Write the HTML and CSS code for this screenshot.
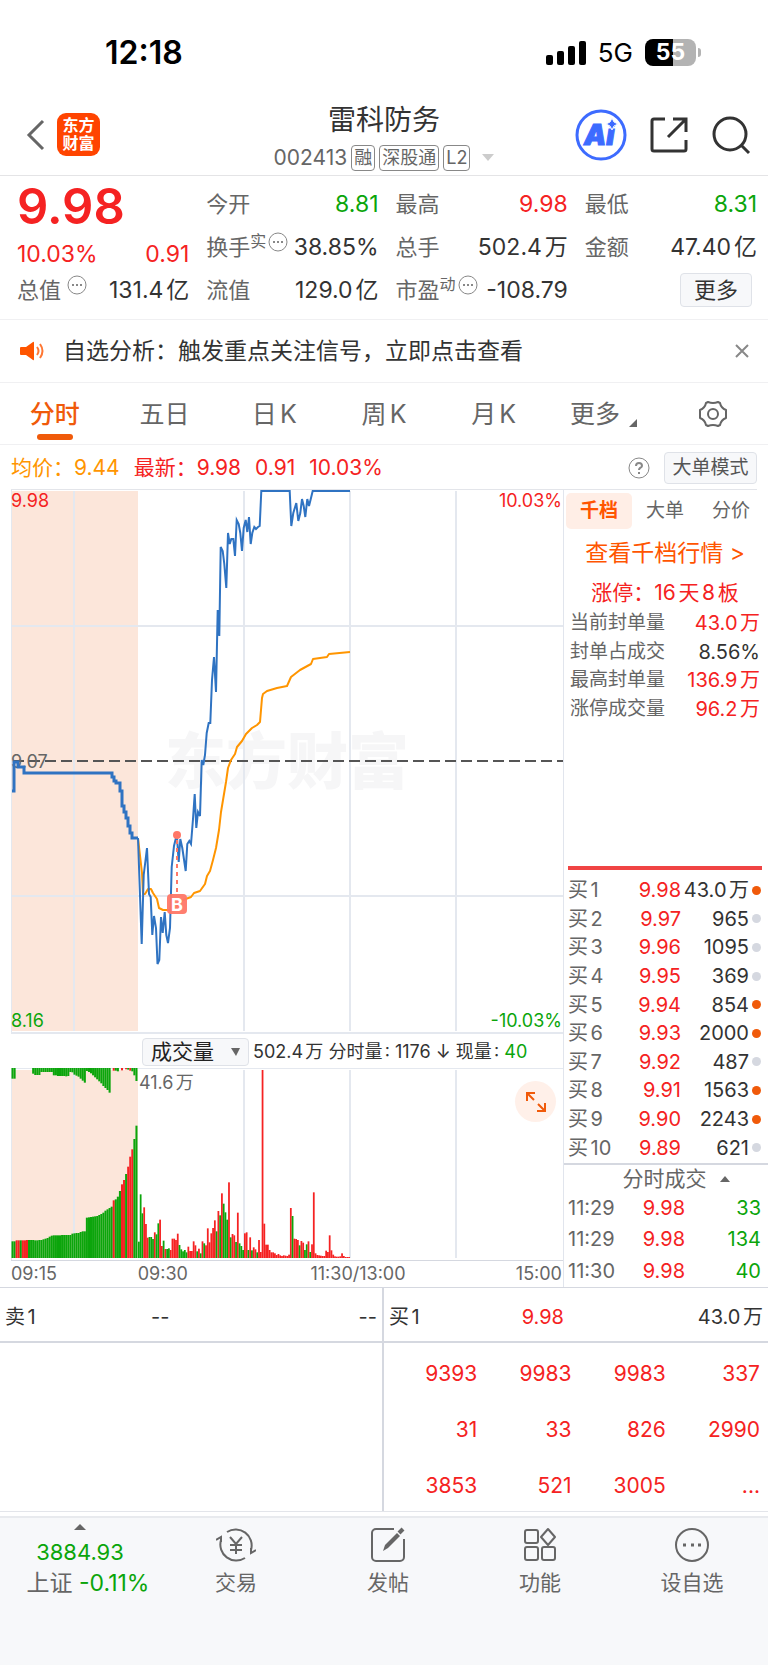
FILE: index.html
```html
<!DOCTYPE html>
<html lang="zh-CN">
<head>
  <meta charset="UTF-8">
  <meta name="viewport" content="width=device-width, initial-scale=1.0">
  <title>雷科防务 002413</title>
  <link rel="stylesheet" href="styles.css">
</head>
<body>
  <div class="status-bar">
    <span class="clock">12:18</span>
    <div class="status-icons">
      <svg width="40" height="24" viewBox="0 0 40 24">
        <rect x="0" y="14" width="7" height="10" rx="2"/>
        <rect x="11" y="10" width="7" height="14" rx="2"/>
        <rect x="22" y="5" width="7" height="19" rx="2"/>
        <rect x="33" y="0" width="7" height="24" rx="2"/>
      </svg>
      <span class="network">5G</span>
      <div class="battery"><span>55</span></div>
    </div>
  </div>

  <header class="header">
    <div class="header-left">
      <button class="icon-button" aria-label="返回">
        <svg width="19" height="32" viewBox="0 0 19 32" fill="none" stroke="#666" stroke-width="3"><path d="M17 2 3 16l14 14"/></svg>
      </button>
      <a class="logo" href="#">东方<br>财富</a>
    </div>
    <div class="header-title">
      <h1>雷科防务</h1>
      <div class="stock-code">
        <span>002413</span>
        <span class="badge">融</span>
        <span class="badge">深股通</span>
        <span class="badge">L2</span>
        <svg class="caret" width="12" height="7" viewBox="0 0 12 7"><path d="M0 0h12L6 7z" fill="#ccc"/></svg>
      </div>
    </div>
    <div class="header-right">
      <button class="icon-button" aria-label="智能助手">
        <svg width="52" height="52" viewBox="0 0 52 52">
          <circle cx="26" cy="26" r="24" fill="#fff" stroke="#3d6bff" stroke-width="3"/>
          <text class="ai-text" x="9" y="36">Ai</text>
          <path d="M37 9l2 4 4 2-4 2-2 4-2-4-4-2 4-2z" fill="#3d6bff" stroke="#fff" stroke-width="1"/>
        </svg>
      </button>
      <button class="icon-button" aria-label="分享">
        <svg width="38" height="38" viewBox="0 0 38 38" fill="none" stroke="#333" stroke-width="3">
          <path d="M15 3H4a2 2 0 0 0-2 2v28a2 2 0 0 0 2 2h30a2 2 0 0 0 2-2V24"/>
          <path d="M23 3h13v13M36 3 18 21"/>
        </svg>
      </button>
      <button class="icon-button" aria-label="搜索">
        <svg width="40" height="40" viewBox="0 0 40 40" fill="none" stroke="#333" stroke-width="3">
          <circle cx="19" cy="19" r="16"/><path d="M30 30l8 8"/>
        </svg>
      </button>
    </div>
  </header>

  <section class="quote">
    <div class="quote-col">
      <div class="price">9.98</div>
      <div class="quote-change"><span>10.03%</span><span>0.91</span></div>
      <div class="quote-row">
        <span class="label">总值</span>
        <svg class="info" viewBox="0 0 20 20"><circle cx="10" cy="10" r="9"/><path d="M5 10h2M9 10h2M13 10h2"/></svg>
        <span class="value">131.4亿</span>
      </div>
    </div>
    <div class="quote-col">
      <div class="quote-row"><span class="label">今开</span><span class="value green">8.81</span></div>
      <div class="quote-row">
        <span class="label">换手</span><span class="sup">实</span>
        <svg class="info" viewBox="0 0 20 20"><circle cx="10" cy="10" r="9"/><path d="M5 10h2M9 10h2M13 10h2"/></svg>
        <span class="value">38.85%</span>
      </div>
      <div class="quote-row"><span class="label">流值</span><span class="value">129.0亿</span></div>
    </div>
    <div class="quote-col">
      <div class="quote-row"><span class="label">最高</span><span class="value red">9.98</span></div>
      <div class="quote-row"><span class="label">总手</span><span class="value">502.4万</span></div>
      <div class="quote-row">
        <span class="label">市盈</span><span class="sup">动</span>
        <svg class="info" viewBox="0 0 20 20"><circle cx="10" cy="10" r="9"/><path d="M5 10h2M9 10h2M13 10h2"/></svg>
        <span class="value">-108.79</span>
      </div>
    </div>
    <div class="quote-col">
      <div class="quote-row"><span class="label">最低</span><span class="value green">8.31</span></div>
      <div class="quote-row"><span class="label">金额</span><span class="value">47.40亿</span></div>
      <div class="quote-row"><button class="more-button">更多</button></div>
    </div>
  </section>

  <div class="notice">
    <svg width="24" height="20" viewBox="0 0 24 20" fill="#ff5500">
      <path d="M1 6h5l7-5q1-1 1 1v16q0 2-1 1l-7-5H1q-1 0-1-1V7q0-1 1-1z"/>
      <path d="M17 6q3 4 0 8M20 3q5 7 0 14" fill="none" stroke="#ff7733" stroke-width="2"/>
    </svg>
    <p>自选分析：触发重点关注信号，立即点击查看</p>
    <button class="icon-button" aria-label="关闭">
      <svg width="14" height="14" viewBox="0 0 14 14" stroke="#888" stroke-width="2"><path d="M1 1l12 12M13 1 1 13"/></svg>
    </button>
  </div>

  <nav class="tabs">
    <button class="active">分时</button>
    <button>五日</button>
    <button>日K</button>
    <button>周K</button>
    <button>月K</button>
    <button>更多<svg class="corner" width="8" height="8" viewBox="0 0 8 8"><path d="M8 0v8H0z" fill="#666"/></svg></button>
    <button aria-label="设置">
      <svg width="30" height="28" viewBox="0 0 30 28" fill="none" stroke="#666" stroke-width="2" stroke-linejoin="round">
        <path d="M10 2q5 2 10 0l2 1q1 5 6 7v8q-5 2-6 7l-2 1q-5-2-10 0l-2-1q-1-5-6-7v-8q5-2 6-7z"/>
        <circle cx="15" cy="14" r="5"/>
      </svg>
    </button>
  </nav>

  <div class="chart-info">
    <span class="orange">均价：9.44</span>
    <span class="red">最新：9.98</span>
    <span class="red">0.91</span>
    <span class="red">10.03%</span>
    <svg class="help" width="22" height="22" viewBox="0 0 22 22"><circle cx="11" cy="11" r="10"/><path d="M8 9q0-3 3-3t3 3q0 1-2 2-1 1-1 2M11 15v2"/></svg>
    <button class="mode-button">大单模式</button>
  </div>

  <main class="market">
    <div class="charts">
      <svg class="price-chart" viewBox="11 490 552 544">
        <rect x="11" y="491" width="127" height="540" fill="#fce6da"/>
        <text class="watermark" x="165" y="784">东方财富</text>
        <path class="grid" d="M11 626h552M11 896h552M74 491v540M244 491v540M350 491v540M456 491v540M11 490v544M11 1033h552"/>
        <path class="base-line" d="M13 761H563"/>
        <text class="tick grey" x="11" y="768">9.07</text>
        <path class="avg-line" d="M138 838 142 873 143 894 145 894 148 889 151 889 153 893 157 899 159 908 163 910 173 910 176 907 183 900 191 897 194 893 200 891 205 884 207 876 210 871 213 860 216 848 219 830 221 812 223 800 225 788 226 782 228 768 231 760 235 754 237 747 242 741 246 734 252 728 257 725 260 722 262 698 263 694 267 691 277 688 287 686 291 677 300 670 311 664 313 659 327 657 329 654 350 652"/>
        <path class="auction-line" d="M12 791h2v-29h4v5h6v6h88v4h2v4h2v2h4v8h2v15h2v6h2v6h2v8h2v7h2v5h6"/>
        <path class="price-line" d="M138 838 141.7 944 143.7 875 145.3 862 147 848 149 894 150.7 897 152.3 935 154 916 156 928 157.5 964 159.3 960 161 917 162.7 933 164.7 912 166.3 935 168 943 170 928 171.7 867 174 846 175.7 839 177 837 178.7 862 180.3 839 182.3 848 185.7 871 187.3 844 189.3 841 191 844 193 819 194.7 794 196.3 828 198 812 200 816 201.7 760 203.3 765 205 755 206.7 733 208.7 723 210.3 723 212 680 214 657 216 692 217.7 610 219.3 636 220.7 547 222.7 551 224.3 564 226.3 588 228 533 229.7 544 231.3 539 233.3 539 235 556 236.7 520 238.7 524 240.3 533 242 551 243.7 528 245.7 520 247.3 532 249 517 250.7 544 252.3 533 254.3 527 256 529 258 527 259.7 526 261.3 491 289.7 491 291.3 526 293.3 513 296.3 503 298.3 521 300.3 513 302 499 303.7 506 305.3 517 307.3 499 309 506 311 498 312.7 491 350 491"/>
        <path class="trade-line" d="M177 840v55"/>
        <circle cx="177" cy="835" r="4" fill="#ff7767"/>
        <rect x="167" y="894" width="20" height="20" rx="4" fill="#ff7767" fill-opacity=".95"/>
        <text class="trade-mark" x="177" y="911">B</text>
        <text class="tick up" x="11" y="507">9.98</text>
        <text class="tick up end" x="562" y="507">10.03%</text>
        <text class="tick down" x="11" y="1027">8.16</text>
        <text class="tick down end" x="562" y="1027">-10.03%</text>
      </svg>

      <div class="volume-bar">
        <div class="select-wrap">
          <select aria-label="指标">
            <option>成交量</option>
            <option>成交额</option>
          </select>
          <svg width="9" height="8" viewBox="0 0 9 8"><path d="M0 0h9L5 8z" fill="#666"/></svg>
        </div>
        <span>502.4万 分时量: 1176 ↓ 现量: <b class="green">40</b></span>
      </div>

      <div class="volume-wrap">
        <svg class="volume-chart" viewBox="0 0 552 192">
          <rect x="0" y="2" width="127" height="188" fill="#fce6da"/>
          <path class="grid" d="M0 0h552M63 2v188M233 2v188M339 2v188M445 2v188M0 0v192"/>
          <g id="bars"></g>
          <text class="tick grey" x="128" y="21">41.6万</text>
        </svg>
        <button class="expand" aria-label="放大">
          <svg width="22" height="22" viewBox="0 0 22 22" fill="none" stroke="#f05a0a" stroke-width="2"><path d="M2 10V2h8M2 2l7 7M20 12v8h-8M20 20l-7-7"/></svg>
        </button>
      </div>

      <div class="axis">
        <span>09:15</span>
        <span>09:30</span>
        <span class="axis-end"><i>11:30/13:00</i><i>15:00</i></span>
      </div>
    </div>

    <aside class="side">
      <div class="side-tabs">
        <button class="active">千档</button>
        <button>大单</button>
        <button>分价</button>
      </div>
      <a class="depth-link" href="#">查看千档行情 &gt;</a>
      <div class="limit-title">涨停：16天8板</div>
      <table class="limit-table">
        <tr><th>当前封单量</th><td class="red">43.0万</td></tr>
        <tr><th>封单占成交</th><td>8.56%</td></tr>
        <tr><th>最高封单量</th><td class="red">136.9万</td></tr>
        <tr><th>涨停成交量</th><td class="red">96.2万</td></tr>
      </table>
      <div class="ladder">
        <table class="bid-table">
          <tr><th>买1</th><td class="red">9.98</td><td>43.0万</td><td><i class="dot hot"></i></td></tr>
          <tr><th>买2</th><td class="red">9.97</td><td>965</td><td><i class="dot"></i></td></tr>
          <tr><th>买3</th><td class="red">9.96</td><td>1095</td><td><i class="dot"></i></td></tr>
          <tr><th>买4</th><td class="red">9.95</td><td>369</td><td><i class="dot"></i></td></tr>
          <tr><th>买5</th><td class="red">9.94</td><td>854</td><td><i class="dot hot"></i></td></tr>
          <tr><th>买6</th><td class="red">9.93</td><td>2000</td><td><i class="dot hot"></i></td></tr>
          <tr><th>买7</th><td class="red">9.92</td><td>487</td><td><i class="dot"></i></td></tr>
          <tr><th>买8</th><td class="red">9.91</td><td>1563</td><td><i class="dot hot"></i></td></tr>
          <tr><th>买9</th><td class="red">9.90</td><td>2243</td><td><i class="dot hot"></i></td></tr>
          <tr><th>买10</th><td class="red">9.89</td><td>621</td><td><i class="dot"></i></td></tr>
        </table>
      </div>
      <button class="trades-title">分时成交<svg width="10" height="6" viewBox="0 0 10 6"><path d="M0 6h10L5 0z" fill="#666"/></svg></button>
      <table class="trades-table">
        <tr><th>11:29</th><td class="red">9.98</td><td class="green">33</td></tr>
        <tr><th>11:29</th><td class="red">9.98</td><td class="green">134</td></tr>
        <tr><th>11:30</th><td class="red">9.98</td><td class="green">40</td></tr>
      </table>
    </aside>
  </main>

  <section class="orders">
    <div class="order-side sell">
      <div class="order-head"><span>卖1</span><span>--</span><span>--</span></div>
    </div>
    <div class="order-side buy">
      <div class="order-head"><span>买1</span><span class="red">9.98</span><span>43.0万</span></div>
      <table class="order-table">
        <tr><td>9393</td><td>9983</td><td>9983</td><td>337</td></tr>
        <tr><td>31</td><td>33</td><td>826</td><td>2990</td></tr>
        <tr><td>3853</td><td>521</td><td>3005</td><td>...</td></tr>
      </table>
    </div>
  </section>

  <footer class="footer">
    <button class="index">
      <svg width="12" height="6" viewBox="0 0 12 6"><path d="M0 6h12L6 0z" fill="#666"/></svg>
      <span class="green">3884.93</span>
      <span class="index-change">上证 <span class="green">-0.11%</span></span>
    </button>
    <button>
      <svg width="40" height="36" viewBox="0 0 40 36" fill="none" stroke="#666" stroke-width="2">
        <path d="M11 5A16 16 0 0 1 35 23M29 31A16 16 0 0 1 5 13M0 13l5-3v5M40 23l-5 3v-5"/>
        <path d="M14 10l6 7 6-7M20 17v10M14 18h12M14 23h12"/>
      </svg>
      <span>交易</span>
    </button>
    <button>
      <svg width="36" height="36" viewBox="0 0 36 36" fill="none" stroke="#666" stroke-width="2">
        <path d="M24 2H6a4 4 0 0 0-4 4v24a4 4 0 0 0 4 4h24a4 4 0 0 0 4-4V12"/>
        <path d="M13 24l2-6L27 6l3 3-12 12z" fill="#666" stroke="none"/><path d="M29 6l4-4" stroke-width="4"/>
      </svg>
      <span>发帖</span>
    </button>
    <button>
      <svg width="34" height="36" viewBox="0 0 34 36" fill="none" stroke="#666" stroke-width="2">
        <rect x="2" y="3" width="13" height="13" rx="2"/>
        <rect x="2" y="20" width="13" height="13" rx="2"/>
        <rect x="19" y="20" width="13" height="13" rx="2"/>
        <path d="M25 2l7 8-7 8-7-8z" stroke-linejoin="round"/>
      </svg>
      <span>功能</span>
    </button>
    <button>
      <svg width="36" height="36" viewBox="0 0 36 36" fill="none" stroke="#666" stroke-width="2">
        <circle cx="18" cy="18" r="16"/>
        <path d="M9 18h3M17 18h3M24 18h3" stroke-width="3"/>
      </svg>
      <span>设自选</span>
    </button>
  </footer>

  <script src="script.js"></script>
</body>
</html>
```
FILE: styles.css
```css
* {
  box-sizing: border-box;
}
body {
  margin: 0;
  background: #fff;
  color: #333;
  font-family: Inter, "Noto Sans CJK SC", sans-serif;
  font-size: 22px;
  line-height: 28px;
  text-autospace: normal;
}
h1, p {
  margin: 0;
  font-weight: 400;
}
button, select {
  font: inherit;
  color: inherit;
  border: none;
  background: none;
  padding: 0;
  margin: 0;
  cursor: pointer;
}
a {
  text-decoration: none;
}
svg {
  display: block;
  flex-shrink: 0;
}
table {
  border-collapse: collapse;
}
th, td {
  padding: 0;
  font-weight: 400;
  text-align: right;
}
th {
  text-align: left;
  color: #666;
}
i {
  font-style: normal;
}
.red {
  color: #f52222;
}
.green {
  color: #0ba50b;
}
.orange {
  color: #ff9500;
}
.icon-button {
  display: flex;
}

/* status bar */
.status-bar {
  display: flex;
  justify-content: space-between;
  align-items: center;
  height: 96px;
  padding: 9px 72px 0 105px;
  color: #000;
}
.clock {
  font-size: 32px;
  font-weight: 600;
}
.status-icons {
  display: flex;
  align-items: center;
  gap: 12px;
}
.network {
  font-size: 26px;
}
.battery {
  position: relative;
  width: 51px;
  height: 27px;
  border-radius: 8px;
  background: linear-gradient(90deg, #000 55%, #b3b3b3 55%);
  color: #fff;
  font-size: 23px;
  font-weight: 700;
  line-height: 27px;
  text-align: center;
}
.battery::after {
  content: "";
  position: absolute;
  right: -5px;
  top: 9px;
  width: 3px;
  height: 9px;
  border-radius: 0 3px 3px 0;
  background: #b3b3b3;
}

/* header */
.header {
  display: grid;
  grid-template-columns: 1fr auto 1fr;
  align-items: center;
  height: 80px;
  padding: 0 17px 2px;
  border-bottom: 1px solid #e4e4e6;
}
.header-left {
  display: flex;
  align-items: center;
  gap: 12px;
  padding-left: 9px;
}
.logo {
  width: 43px;
  height: 43px;
  padding: 3px 0;
  border-radius: 9px;
  background: #ff4400;
  color: #fff;
  font-size: 16px;
  font-weight: 700;
  line-height: 18px;
  text-align: center;
}
.header-title {
  display: flex;
  flex-direction: column;
  align-items: center;
  gap: 8px;
  padding-top: 4px;
}
.header-title h1 {
  font-size: 28px;
  line-height: 34px;
}
.stock-code {
  display: flex;
  align-items: center;
  gap: 4px;
  color: #666;
  font-size: 21px;
  line-height: 26px;
}
.badge {
  padding: 0 2px;
  border: 1px solid #888;
  border-radius: 4px;
  font-size: 18px;
  line-height: 24px;
}
.caret {
  margin-left: 8px;
}
.header-right {
  display: flex;
  justify-content: flex-end;
  align-items: center;
  gap: 23px;
}
.ai-text {
  fill: #3d6bff;
  stroke: #3d6bff;
  font-size: 28px;
  font-weight: 900;
  font-style: italic;
}

/* quote */
.quote {
  display: grid;
  grid-template-columns: repeat(4, 1fr);
  gap: 17px;
  padding: 6px 11px 8px 17px;
  border-bottom: 1px solid #f0f0f2;
}
.price {
  color: #f52222;
  font-size: 49px;
  font-weight: 600;
  line-height: 50px;
}
.quote-change {
  display: flex;
  justify-content: space-between;
  padding: 8px 0 0;
  color: #f52222;
  font-size: 23px;
}
.quote-row {
  display: flex;
  align-items: center;
  height: 43px;
}
.label {
  color: #666;
}
.value {
  margin-left: auto;
  font-size: 23px;
}
.sup {
  align-self: flex-start;
  margin-top: 4px;
  color: #666;
  font-size: 16px;
  line-height: 24px;
}
.info {
  align-self: flex-start;
  width: 20px;
  margin: 7px 0 0 2px;
  fill: none;
  stroke: #888;
  stroke-width: 1;
}
.label + .info {
  margin-left: 6px;
}
.info path {
  stroke-width: 2;
}
.more-button {
  width: 72px;
  height: 34px;
  margin: 0 5px 0 auto;
  border: 1px solid #dfe2e8;
  border-radius: 4px;
  background: #f7f8fa;
}

/* notice */
.notice {
  display: flex;
  align-items: center;
  gap: 19px;
  height: 63px;
  padding: 0 19px 0 20px;
  border-bottom: 1px solid #f0f0f2;
  font-size: 23px;
}
.notice p {
  flex: 1;
}

/* tabs */
.tabs {
  display: grid;
  grid-template-columns: repeat(7, 1fr);
  height: 62px;
  border-bottom: 1px solid #f0f0f2;
  color: #666;
  font-size: 25px;
}
.tabs button {
  position: relative;
  display: flex;
  justify-content: center;
  align-items: center;
}
.tabs .active {
  color: #f05a0a;
  font-weight: 500;
}
.tabs .active::after {
  content: "";
  position: absolute;
  bottom: 4px;
  width: 36px;
  height: 6px;
  border-radius: 3px;
  background: #f05a0a;
}
.corner {
  margin: 18px 0 0 9px;
}

/* chart */
.chart-info {
  display: flex;
  align-items: center;
  gap: 14px;
  height: 45px;
  margin: 0 11px;
  padding-top: 2px;
  border-bottom: 1px solid #e3e5ea;
  font-size: 21px;
}
.help {
  margin-left: auto;
  fill: none;
  stroke: #888;
}
.help path {
  stroke-width: 2;
}
.mode-button {
  width: 93px;
  height: 32px;
  border: 1px solid #dfe2e8;
  border-radius: 4px;
  background: #f7f8fa;
  color: #555;
  font-size: 19px;
}
.market {
  display: flex;
  border-bottom: 1px solid #d5d8e0;
}
.charts {
  flex: 1;
  min-width: 0;
  margin-left: 11px;
}
.price-chart, .volume-chart {
  width: 100%;
  height: auto;
}
.grid {
  fill: none;
  stroke: #e4e8ef;
  stroke-width: 2;
}
.watermark {
  fill: #f6f6f7;
  font-size: 61px;
  font-weight: 900;
}
.base-line {
  stroke: #555;
  stroke-width: 2;
  stroke-dasharray: 11 5;
}
.avg-line, .price-line, .auction-line {
  fill: none;
  stroke: #2f73c2;
  stroke-width: 2;
}
.auction-line {
  stroke-width: 3;
}
.avg-line {
  stroke: #ff9500;
  stroke-linejoin: round;
}
.trade-line {
  stroke: #ff7767;
  stroke-width: 2;
  stroke-dasharray: 4 4;
}
.trade-mark {
  fill: #fff;
  font-size: 18px;
  font-weight: 700;
  text-anchor: middle;
}
.tick {
  font-size: 18px;
}
.tick.up {
  fill: #f52222;
}
.tick.down {
  fill: #0ba50b;
}
.tick.grey {
  fill: #666;
}
.tick.end {
  text-anchor: end;
}
.volume-bar {
  display: flex;
  align-items: center;
  gap: 4px;
  height: 34px;
  padding: 2px 0 0 131px;
  font-size: 18px;
  white-space: nowrap;
}
.volume-bar b {
  font-weight: 400;
}
.select-wrap {
  position: relative;
}
.select-wrap select {
  display: block;
  width: 107px;
  height: 28px;
  padding-left: 8px;
  border: 1px solid #dfe2e8;
  border-radius: 4px;
  background: #f7f8fa;
  color: #222;
  font-size: 21px;
  line-height: 26px;
  appearance: none;
}
.select-wrap svg {
  position: absolute;
  right: 9px;
  top: 10px;
  pointer-events: none;
}
.volume-wrap {
  position: relative;
}
.bar-up {
  fill: #f52222;
}
.bar-down {
  fill: #0ba50b;
}
.expand {
  position: absolute;
  top: 13px;
  right: 7px;
  display: flex;
  justify-content: center;
  align-items: center;
  width: 41px;
  height: 41px;
  border-radius: 50%;
  background: #fff0e9;
}
.axis {
  display: grid;
  grid-template-columns: 127fr 173fr 252fr;
  padding-right: 1px;
  border-top: 1px solid #d5d8e0;
  color: #666;
  font-size: 18px;
  line-height: 26px;
}
.axis-end {
  display: flex;
  justify-content: space-between;
}

/* side panel */
.side {
  display: flex;
  flex-direction: column;
  width: 205px;
  border-left: 1px solid #e1e5ed;
  font-size: 20px;
}
.side-tabs {
  display: grid;
  grid-template-columns: repeat(3, 1fr);
  height: 39px;
  padding: 3px 4px 0 2px;
  color: #666;
  font-size: 19px;
}
.side-tabs .active {
  border-radius: 5px;
  background: #ffeee6;
  color: #ff5500;
  font-weight: 600;
}
.depth-link {
  padding-right: 2px;
  color: #ff5500;
  font-size: 23px;
  line-height: 48px;
  text-align: center;
}
.limit-title {
  padding-right: 2px;
  color: #f52222;
  font-size: 21px;
  line-height: 32px;
  text-align: center;
}
.limit-table {
  height: 114px;
  margin: 0 8px 0 6px;
}
.limit-table th {
  font-size: 19px;
}
.side tr {
  line-height: 24px;
}
.ladder {
  margin: auto 6px 0 4px;
  padding: 6px 0 1px;
  border-top: 4px solid #f04444;
}
.bid-table {
  width: 100%;
  height: 286px;
  table-layout: fixed;
}
.bid-table th {
  width: 46px;
}
.bid-table td:nth-child(2) {
  width: 67px;
}
.bid-table td:nth-child(4) {
  width: 13px;
}
.dot {
  display: block;
  width: 9px;
  height: 9px;
  margin-left: 3px;
  border-radius: 50%;
  background: #d5d8e0;
}
.dot.hot {
  background: #f05a0a;
}
.trades-title {
  display: flex;
  justify-content: center;
  align-items: center;
  gap: 13px;
  height: 29px;
  padding-left: 20px;
  border-top: 2px solid #d5d8e0;
  color: #666;
  font-size: 21px;
}
.trades-table {
  height: 95px;
  margin: 0 7px 0 4px;
}
.trades-table th {
  width: 60px;
}
.trades-table td:nth-child(2) {
  width: 57px;
}

/* orders */
.orders {
  display: grid;
  grid-template-columns: 1fr 1fr;
  border-bottom: 1px solid #e3e5ea;
  font-size: 20px;
}
.sell {
  border-right: 2px solid #d5d8e0;
}
.order-head {
  display: grid;
  grid-template-columns: 1fr 1fr 1fr;
  height: 55px;
  padding: 0 5px;
  border-bottom: 2px solid #d5d8e0;
  line-height: 58px;
}
.order-head span:nth-child(2) {
  padding-left: 22px;
}
.buy .order-head span:nth-child(2) {
  padding-left: 8px;
}
.order-head span:nth-child(3) {
  text-align: right;
}
.order-table {
  width: calc(100% - 7px);
  margin-left: 7px;
  color: #f52222;
  font-size: 21px;
  table-layout: fixed;
}
.order-table td {
  height: 56px;
  padding: 6px 8px 0 0;
}

/* footer */
.footer {
  display: grid;
  grid-template-columns: 160fr 152fr 152fr 152fr 152fr;
  align-items: start;
  min-height: 149px;
  margin-top: 4px;
  padding-top: 6px;
  border-top: 2px solid #e8eaee;
  background: #f7f8fa;
  color: #666;
  font-size: 21px;
}
.footer button {
  display: flex;
  flex-direction: column;
  align-items: center;
  gap: 6px;
  padding-top: 3px;
}
.footer .index {
  gap: 3px;
  padding-top: 0;
  font-size: 22px;
}
.index > .green {
  padding-top: 5px;
}
.index-change {
  padding-left: 16px;
  font-size: 23px;
}
```
FILE: script.js
```js
// opening auction: matched volume (bottom) and unmatched volume (top)
const matched = [
  50, 50, 53, 53, 53, 53, 53, 54, 54, 54, 54, 53, 53, 54, 54, 56, 58, 60, 64, 67,
  68, 68, 68, 68, 69, 69, 69, 69, 69, 73, 74, 75, 75, 78, 80, 80, 121, 122, 123, 124,
  125, 126, 129, 132, 136, 142, 146, 150, 154, 173, 176, 184, 201, 221, 234, 252, 274, 304, 326, 357, 397
];
const matchedUp = [2, 3, 5, 6, 7, 49, 53, 54, 56, 57, 58];
const unmatched = [
  32, 32, 0, 0, 0, 0, 0, 0, 0, 0, 17, 21, 21, 21, 12, 12, 12, 12, 12, 12,
  22, 22, 24, 24, 24, 24, 25, 24, 12, 13, 20, 23, 26, 32, 38, 44, 9, 12, 16, 22,
  28, 34, 40, 46, 54, 60, 66, 74, 0, 8, 8, 10, 0, 7, 0, 4, 5, 8, 10, 22, 39
];
const unmatchedUp = [49, 53, 55, 57];

// one value per minute from 09:30, negative when the price fell
const minutes = [
  -49, -191, -134, 152, 102, 61, -63, -63, -57, 77, -71, -104, 115, 36, -52, 27, -27, -29, 24, 58,
  58, 54, 73, -39, -26, -20, -24, -17, 34, 21, 21, 50, 38, -20, 28, -14, 50, -44, 38, 89,
  47, 74, 90, 113, -80, 141, -128, 194, -163, -137, -115, 227, -62, 72, 68, -48, 136, -44, -36, -24,
  74, 77, -24, 62, -23, 32, 26, -17, 54, 18, 564, 103, 40, 40, 24, 17, 17, 14, 9, 12,
  8, 6, 8, 7, 6, 10, 150, -126, 58, 57, 54, -38, 51, 46, -24, -41, 50, -18, 41, 197,
  14, 9, 8, 7, 6, 6, 22, 18, 68, 23, 10, 5, 4, 4, 5, 14, 6, 3, 3, 3
];

const bars = document.getElementById('bars');
const bottom = 190;
const scale = 188 / 564;

function addBar(x, y, width, height, up) {
  const rect = document.createElementNS('http://www.w3.org/2000/svg', 'rect');
  rect.setAttribute('x', x);
  rect.setAttribute('y', y);
  rect.setAttribute('width', width);
  rect.setAttribute('height', height);
  rect.setAttribute('class', up ? 'bar-up' : 'bar-down');
  bars.appendChild(rect);
}

const auctionStep = 126 / matched.length;
matched.forEach((v, i) => {
  const h = v * scale;
  addBar(i * auctionStep + 0.5, bottom - h, auctionStep, h, matchedUp.includes(i));
});
unmatched.forEach((v, i) => {
  if (v) addBar(i * auctionStep + 0.5, 0, auctionStep, v * scale, unmatchedUp.includes(i));
});

const minuteStep = 212 / minutes.length;
minutes.forEach((v, i) => {
  const h = Math.abs(v) * scale;
  addBar(127 + i * minuteStep, bottom - h, minuteStep, h, v > 0);
});
```
